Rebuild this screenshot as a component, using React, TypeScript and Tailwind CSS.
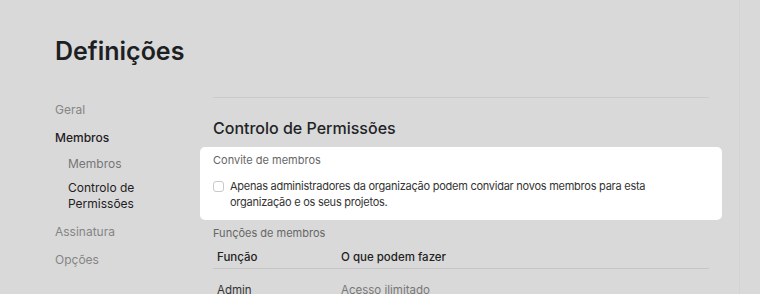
export default function App() {
  return (
    <div className="w-[760px] h-[294px] overflow-hidden bg-[#d9d9d9] font-['Inter',sans-serif] antialiased">
      <div className="w-[740px] h-full border-r border-[#d3d3d3] pl-[55px] pt-[35px]">
        <h1 className="text-[25px] leading-[32px] font-semibold text-[#1d1f23]">
          Definições
        </h1>

        <div className="flex mt-[29px]">
          {/* Sidebar */}
          <nav className="w-[158px] shrink-0 flex flex-col text-[12px] leading-4">
            <a className="py-[6px] text-[#858585]">Geral</a>
            <a className="py-[6px] text-[#1f2023] font-medium">Membros</a>
            <div className="flex flex-col pl-[13px] pb-[2px]">
              <a className="py-1 text-[#767676]">Membros</a>
              <a className="py-1 text-[#1f2023]">
                Controlo de
                <br />
                Permissões
              </a>
            </div>
            <a className="py-[6px] text-[#858585]">Assinatura</a>
            <a className="py-[6px] text-[#858585]">Opções</a>
          </nav>

          {/* Main */}
          <main className="w-[496px] mt-px border-t border-[#cbcbcb] pt-[18px]">
            <h2 className="text-[16px] leading-6 font-medium text-[#222326]">
              Controlo de Permissões
            </h2>

            <section className="-mx-[13px] mt-[7px] bg-white rounded-[5px] px-[13px] pt-[5px] pb-[10px]">
              <div className="text-[11px] leading-4 text-[#666]">Convite de membros</div>
              <label className="mt-[10px] flex items-start gap-[6px]">
                <span className="mt-[3px] w-[11px] h-[11px] shrink-0 rounded-[3px] border border-[#c9c9c9] bg-white" />
                <span className="max-w-[460px] text-[11px] leading-4 tracking-[-0.25px] text-[#333]">
                  Apenas administradores da organização podem convidar novos membros para esta
                  organização e os seus projetos.
                </span>
              </label>
            </section>

            <div className="mt-[5px] text-[11px] leading-4 text-[#666]">Funções de membros</div>

            <table className="mt-[3px] w-full text-[11.5px] leading-4 border-collapse">
              <thead>
                <tr className="border-b border-[#c6c6c6]">
                  <th className="w-[124px] px-1 pt-[5px] pb-[3px] text-left font-medium text-[#222]">Função</th>
                  <th className="px-1 pt-[5px] pb-[3px] text-left font-medium text-[#222]">O que podem fazer</th>
                </tr>
              </thead>
              <tbody>
                <tr>
                  <td className="px-1 pt-[13px] pb-3 text-[#333]">Admin</td>
                  <td className="px-1 pt-[13px] pb-3 text-[#777]">Acesso ilimitado</td>
                </tr>
              </tbody>
            </table>
          </main>
        </div>
      </div>
    </div>
  );
}
